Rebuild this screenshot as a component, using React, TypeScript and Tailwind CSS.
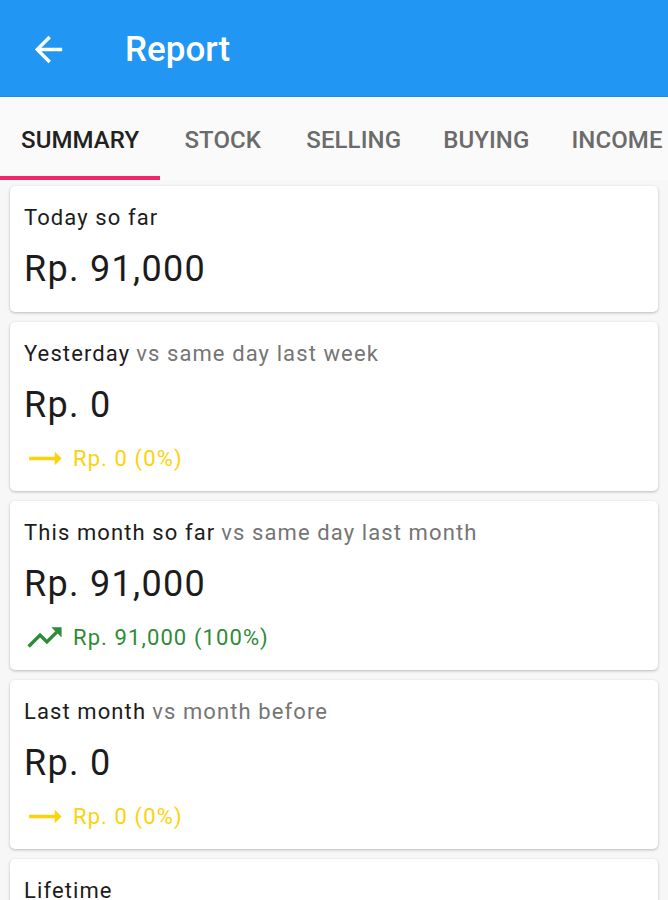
import React from 'react';

type Trend = 'flat' | 'up';

interface SummaryCardProps {
  title: string;
  subtitle?: string;
  amount: string;
  change?: { trend: Trend; text: string };
}

const ArrowBack = () => (
  <svg viewBox="0 0 24 24" className="w-[41px] h-[41px]" fill="#ffffff">
    <path d="M20 11H7.83l5.59-5.59L12 4l-8 8 8 8 1.41-1.41L7.83 13H20v-2z" />
  </svg>
);

const TrendIcon = ({ trend }: { trend: Trend }) => {
  if (trend === 'up') {
    return (
      <svg viewBox="0 0 24 24" className="w-[41px] h-[41px] shrink-0" fill="#2e8b36">
        <path d="M16 6l2.29 2.29-4.88 4.88-4-4L2 16.59 3.41 18l6-6 4 4 6.3-6.29L22 12V6z" />
      </svg>
    );
  }
  return (
    <svg viewBox="0 0 24 24" className="w-[41px] h-[41px] shrink-0" fill="#fdd20a">
      <path d="M22 12l-4-4v3H3v2h15v3z" />
    </svg>
  );
};

const SummaryCard: React.FC<SummaryCardProps> = ({ title, subtitle, amount, change }) => {
  return (
    <div
      className={`bg-white rounded-[5px] shadow-[0_1px_3px_rgba(0,0,0,0.25)] px-[14px] pt-[17px] ${
        change ? 'pb-[18px]' : 'pb-[21px]'
      }`}
    >
      <div className="h-[30px] flex items-center text-[22px] leading-[30px] tracking-[0.05em] whitespace-nowrap">
        <span className="text-[#1c1c1c]">{title}</span>
        {subtitle && <span className="text-[#757575] ml-[6px]">{subtitle}</span>}
      </div>
      <div className="mt-[14px] h-[44px] flex items-center text-[36px] leading-[44px] tracking-[0.036em] text-[#1c1c1c]">
        {amount}
      </div>
      {change && (
        <div
          className={`mt-[16px] h-[30px] flex items-center text-[22px] tracking-[0.05em] ${
            change.trend === 'up' ? 'text-[#2e8b36]' : 'text-[#fdd20a]'
          }`}
        >
          <TrendIcon trend={change.trend} />
          <span className="ml-[8px]">{change.text}</span>
        </div>
      )}
    </div>
  );
};

const tabs = ['SUMMARY', 'STOCK', 'SELLING', 'BUYING', 'INCOME'];

export default function App() {
  return (
    <div
      className="w-[668px] h-[900px] overflow-hidden bg-[#f7f7f7]"
      style={{ fontFamily: 'Roboto, "Noto Sans", sans-serif' }}
    >
      <div className="h-[97px] bg-[#2196f3] border-b border-[#1e88e5] flex items-center pl-[28px] pt-[2px]">
        <ArrowBack />
        <span className="ml-[56px] mt-[3px] text-white text-[35px] font-medium">Report</span>
      </div>

      <div className="h-[83px] bg-[#fafafa] flex whitespace-nowrap overflow-hidden">
        {tabs.map((tab, i) => (
          <div
            key={tab}
            className={`relative shrink-0 min-w-[125px] px-[21px] pt-[3px] flex items-center justify-center text-[24px] tracking-[0.1px] font-medium ${
              i === 0 ? 'text-[#212121]' : 'text-[#6b6b6b]'
            }`}
          >
            {tab}
            {i === 0 && <div className="absolute left-0 right-0 bottom-0 h-[4px] bg-[#f0266a]" />}
          </div>
        ))}
      </div>

      <div className="px-[10px] pt-[6px] flex flex-col gap-[10px]">
        <SummaryCard title="Today so far" amount="Rp. 91,000" />
        <SummaryCard
          title="Yesterday"
          subtitle="vs same day last week"
          amount="Rp. 0"
          change={{ trend: 'flat', text: 'Rp. 0 (0%)' }}
        />
        <SummaryCard
          title="This month so far"
          subtitle="vs same day last month"
          amount="Rp. 91,000"
          change={{ trend: 'up', text: 'Rp. 91,000 (100%)' }}
        />
        <SummaryCard
          title="Last month"
          subtitle="vs month before"
          amount="Rp. 0"
          change={{ trend: 'flat', text: 'Rp. 0 (0%)' }}
        />
        <SummaryCard title="Lifetime" amount="Rp. 91,000" />
      </div>
    </div>
  );
}
